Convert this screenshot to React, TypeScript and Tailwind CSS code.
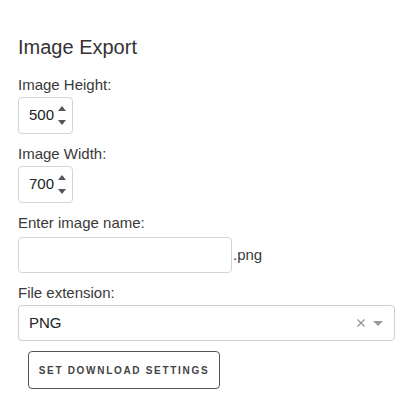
function Spinner() {
  return (
    <div className="flex flex-col items-center justify-center gap-[9px]">
      <svg width="8" height="5" viewBox="0 0 8 5">
        <path d="M0 5 L4 0 L8 5 Z" fill="#555" />
      </svg>
      <svg width="8" height="5" viewBox="0 0 8 5">
        <path d="M0 0 L4 5 L8 0 Z" fill="#555" />
      </svg>
    </div>
  )
}

function NumberBox({ value }: { value: string }) {
  return (
    <div className="flex h-[37px] w-[55px] items-center justify-between rounded-[4px] border border-[#d4d4d4] bg-white pl-[10px] pr-[6px]">
      <span className="text-[15px] text-[#222]">{value}</span>
      <Spinner />
    </div>
  )
}

function Label({ children, className = '' }: { children: React.ReactNode; className?: string }) {
  return <div className={`text-[15px] leading-[22px] text-[#3a3a3a] ${className}`}>{children}</div>
}

export default function App() {
  return (
    <div
      className="min-h-[408px] w-[417px] bg-white pl-[18px] pr-[22px] pt-[35px]"
      style={{ fontFamily: '"Liberation Sans", Arial, sans-serif' }}
    >
      <h2 className="text-[20px] leading-[24px] text-[#333]">Image Export</h2>

      <Label className="mt-[15px]">Image Height:</Label>
      <div className="mt-[1px]">
        <NumberBox value="500" />
      </div>

      <Label className="mt-[9px]">Image Width:</Label>
      <div className="mt-[1px]">
        <NumberBox value="700" />
      </div>

      <Label className="mt-[9px]">Enter image name:</Label>
      <div className="mt-[3px] flex items-center">
        <div className="h-[36px] w-[214px] rounded-[4px] border border-[#d4d4d4] bg-white" />
        <span className="ml-[1px] text-[15px] text-[#3a3a3a]">.png</span>
      </div>

      <Label className="mt-[9px]">File extension:</Label>
      <div className="mt-[1px] flex h-[36px] w-[377px] items-center justify-between rounded-[4px] border border-[#cfcfcf] bg-white pl-[10px] pr-[11px]">
        <span className="text-[15px] text-[#222]">PNG</span>
        <div className="flex items-center gap-[8px]">
          <svg width="8" height="8" viewBox="0 0 8 8">
            <path d="M0.5 0.5 L7.5 7.5 M7.5 0.5 L0.5 7.5" stroke="#999" strokeWidth="1.4" />
          </svg>
          <svg width="10" height="5" viewBox="0 0 10 5">
            <path d="M0 0 L5 5 L10 0 Z" fill="#999" />
          </svg>
        </div>
      </div>

      <div className="mt-[10px] pl-[10px]">
        <button className="flex h-[38px] w-[192px] items-center justify-center rounded-[4px] border border-[#555] bg-white text-[10px] font-semibold tracking-[1.7px] text-[#444]">
          SET DOWNLOAD SETTINGS
        </button>
      </div>
    </div>
  )
}
